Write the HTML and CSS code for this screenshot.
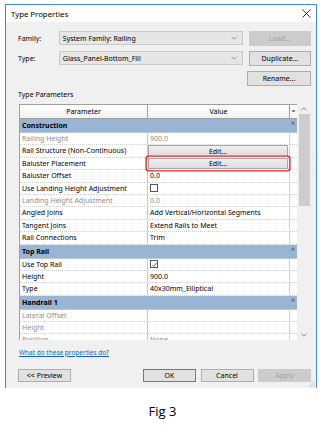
FILE: index.html
```html
<!DOCTYPE html>
<html lang="en">
  <head>
    <meta charset="UTF-8" />
    <title>Type Properties</title>
    <link rel="stylesheet" href="styles.css">
  </head>
  <body>
    <div class="window">
      <div class="titlebar">
        <span class="title">Type Properties</span>
        <svg class="close" width="9" height="9" viewBox="0 0 9 9">
          <path d="M0.5 0.5 L8.5 8.5 M8.5 0.5 L0.5 8.5" stroke="#222" stroke-width="0.9" fill="none" />
        </svg>
      </div>
      <div class="content">
        <div class="form-row">
          <label class="field-label">Family:</label>
          <div class="combo">
            <span>System Family: Railing</span>
            <svg width="6" height="4" viewBox="0 0 6 4"><path d="M0.5 0.8 L3 3.2 L5.5 0.8" stroke="#777" stroke-width="0.7" fill="none" /></svg>
          </div>
          <button class="btn side-btn" disabled>Load...</button>
        </div>
        <div class="form-row">
          <label class="field-label">Type:</label>
          <div class="combo">
            <span>Glass_Panel-Bottom_Fill</span>
            <svg width="6" height="4" viewBox="0 0 6 4"><path d="M0.5 0.8 L3 3.2 L5.5 0.8" stroke="#777" stroke-width="0.7" fill="none" /></svg>
          </div>
          <button class="btn side-btn">Duplicate...</button>
        </div>
        <div class="form-row end">
          <button class="btn side-btn">Rename...</button>
        </div>

        <div class="section-label">Type Parameters</div>

        <div class="grid-wrap">
          <div class="grid">
            <div class="row head">
              <div class="cell c1">Parameter</div>
              <div class="cell c2">Value</div>
              <div class="cell c3">=</div>
            </div>

            <div class="row cat">
              <div class="cat-name">Construction</div>
              <svg class="collapse" width="4" height="4" viewBox="0 0 4 4"><path d="M0.5 2 L2 0.8 L3.5 2 M0.5 3.5 L2 2.3 L3.5 3.5" stroke="#333" stroke-width="0.6" fill="none" /></svg>
            </div>
            <div class="row dim">
              <div class="cell c1">Railing Height</div>
              <div class="cell c2">900.0</div>
              <div class="cell c3"></div>
            </div>
            <div class="row">
              <div class="cell c1">Rail Structure (Non-Continuous)</div>
              <div class="cell c2 btn-cell"><button class="edit">Edit...</button></div>
              <div class="cell c3"></div>
            </div>
            <div class="row">
              <div class="cell c1">Baluster Placement</div>
              <div class="cell c2 btn-cell"><button class="edit marked">Edit...</button></div>
              <div class="cell c3"></div>
            </div>
            <div class="row">
              <div class="cell c1">Baluster Offset</div>
              <div class="cell c2">0.0</div>
              <div class="cell c3"></div>
            </div>
            <div class="row">
              <div class="cell c1">Use Landing Height Adjustment</div>
              <div class="cell c2"><span class="check"></span></div>
              <div class="cell c3"></div>
            </div>
            <div class="row dim">
              <div class="cell c1">Landing Height Adjustment</div>
              <div class="cell c2">0.0</div>
              <div class="cell c3"></div>
            </div>
            <div class="row">
              <div class="cell c1">Angled Joins</div>
              <div class="cell c2">Add Vertical/Horizontal Segments</div>
              <div class="cell c3"></div>
            </div>
            <div class="row">
              <div class="cell c1">Tangent Joins</div>
              <div class="cell c2">Extend Rails to Meet</div>
              <div class="cell c3"></div>
            </div>
            <div class="row">
              <div class="cell c1">Rail Connections</div>
              <div class="cell c2">Trim</div>
              <div class="cell c3"></div>
            </div>

            <div class="row cat">
              <div class="cat-name">Top Rail</div>
              <svg class="collapse" width="4" height="4" viewBox="0 0 4 4"><path d="M0.5 2 L2 0.8 L3.5 2 M0.5 3.5 L2 2.3 L3.5 3.5" stroke="#333" stroke-width="0.6" fill="none" /></svg>
            </div>
            <div class="row">
              <div class="cell c1">Use Top Rail</div>
              <div class="cell c2">
                <span class="check">
                  <svg width="7" height="7" viewBox="0 0 7 7"><path d="M1.3 3.8 L2.8 5.3 L5.8 1.6" stroke="#333" stroke-width="0.8" fill="none" /></svg>
                </span>
              </div>
              <div class="cell c3"></div>
            </div>
            <div class="row">
              <div class="cell c1">Height</div>
              <div class="cell c2">900.0</div>
              <div class="cell c3"></div>
            </div>
            <div class="row">
              <div class="cell c1">Type</div>
              <div class="cell c2">40x30mm_Elliptical</div>
              <div class="cell c3"></div>
            </div>

            <div class="row cat">
              <div class="cat-name">Handrail 1</div>
              <svg class="collapse" width="4" height="4" viewBox="0 0 4 4"><path d="M0.5 2 L2 0.8 L3.5 2 M0.5 3.5 L2 2.3 L3.5 3.5" stroke="#333" stroke-width="0.6" fill="none" /></svg>
            </div>
            <div class="row dim">
              <div class="cell c1">Lateral Offset</div>
              <div class="cell c2"></div>
              <div class="cell c3"></div>
            </div>
            <div class="row dim">
              <div class="cell c1">Height</div>
              <div class="cell c2"></div>
              <div class="cell c3"></div>
            </div>
            <div class="row dim">
              <div class="cell c1">Position</div>
              <div class="cell c2">None</div>
              <div class="cell c3"></div>
            </div>
          </div>

          <div class="scrollbar">
            <svg class="arrow" width="6" height="4" viewBox="0 0 6 4"><path d="M0.5 3.2 L3 0.8 L5.5 3.2" stroke="#555" stroke-width="0.7" fill="none" /></svg>
            <div class="track"><div class="thumb"></div></div>
            <svg class="arrow" width="6" height="4" viewBox="0 0 6 4"><path d="M0.5 0.8 L3 3.2 L5.5 0.8" stroke="#555" stroke-width="0.7" fill="none" /></svg>
          </div>
        </div>

        <a class="help-link" href="#">What do these properties do?</a>

        <div class="footer">
          <button class="btn foot-btn">&lt;&lt; Preview</button>
          <div class="foot-right">
            <button class="btn foot-btn default">OK</button>
            <button class="btn foot-btn">Cancel</button>
            <button class="btn foot-btn" disabled>Apply</button>
          </div>
        </div>
      </div>
      <svg class="grip" width="6" height="6" viewBox="0 0 6 6">
        <rect x="4.5" y="0.5" width="1" height="1" fill="#aaa" />
        <rect x="2.5" y="2.5" width="1" height="1" fill="#aaa" />
        <rect x="4.5" y="2.5" width="1" height="1" fill="#aaa" />
        <rect x="0.5" y="4.5" width="1" height="1" fill="#aaa" />
        <rect x="2.5" y="4.5" width="1" height="1" fill="#aaa" />
        <rect x="4.5" y="4.5" width="1" height="1" fill="#aaa" />
      </svg>
    </div>

    <div class="caption">Fig 3</div>
  </body>
</html>
```

FILE: styles.css
```css
body {
  margin: 0;
  background-color: white;
  font-family: "Noto Sans", "Liberation Sans", sans-serif;
  font-size: 7px;
  color: #000;
}
.window {
  position: relative;
  margin: 4px 0 0 5px;
  width: 310px;
  border: 1px solid #3d8ddb;
  border-bottom: none;
}
.titlebar {
  height: 17px;
  background-color: white;
  display: flex;
  align-items: center;
  justify-content: space-between;
  padding: 0 5px 0 5px;
}
.title {
  font-size: 7.8px;
}
.content {
  background-color: #f0f0f0;
  padding: 9px 5px 7px 12px;
  height: 350px;
}
.form-row {
  display: flex;
  align-items: center;
  height: 14px;
  margin-bottom: 6px;
}
.form-row.end {
  justify-content: flex-end;
}
.field-label {
  width: 42px;
}
.combo {
  width: 178px;
  height: 12px;
  border: 1px solid #c8c8c8;
  background-color: #e6e6e6;
  display: flex;
  align-items: center;
  justify-content: space-between;
  padding: 0 5px 0 4px;
  box-sizing: content-box;
  margin-right: 6px;
}
.combo span {
  margin-left: -1px;
}
.btn {
  font-family: inherit;
  font-size: 7px;
  padding: 0;
  background-color: #e1e1e1;
  border: 1px solid #adadad;
  color: #000;
  box-sizing: border-box;
}
.btn:disabled {
  background-color: #cccccc;
  border-color: #cccccc;
  color: #a0a0a0;
}
.side-btn {
  width: 64px;
  height: 15px;
}
.section-label {
  margin-top: -1px;
  height: 10px;
  line-height: 10px;
}
.grid-wrap {
  margin-top: 4px;
  margin-left: 1px;
  height: 236px;
  display: flex;
  width: 291px;
}
.grid {
  width: 278px;
  height: 236px;
  overflow: hidden;
  background-color: white;
  border-left: 1px solid #a0a0a0;
  box-sizing: border-box;
}
.row {
  display: flex;
  height: 12.4px;
  border-bottom: 1px dotted #d0d0d0;
  box-sizing: border-box;
}
.cell {
  padding-left: 2px;
  line-height: 11px;
  white-space: nowrap;
  overflow: hidden;
  box-sizing: border-box;
}
.c1 {
  width: 128px;
  border-right: 1px solid #c8c8c8;
}
.c2 {
  width: 142px;
  border-right: 1px solid #d0d0d0;
}
.c3 {
  width: 7px;
  padding: 0;
}
.row.dim {
  color: #8e8e8e;
}
.row.head {
  height: 15px;
  border-top: 1px solid #a0a0a0;
  border-bottom: 1px solid #a0a0a0;
  background: linear-gradient(#ffffff, #f2f2f2);
}
.row.head .cell {
  text-align: center;
  line-height: 13px;
  border-right: 1px solid #a0a0a0;
  padding: 0;
}
.row.head .c3 {
  font-size: 6px;
  border-right: none;
}
.row.cat {
  height: 14px;
  background-color: #9ab5d3;
  border-bottom: 1px solid #b8c9dd;
  align-items: center;
  justify-content: space-between;
  padding: 0 2px 0 2px;
}
.cat-name {
  font-weight: bold;
}
.collapse {
  margin-top: -5px;
}
.btn-cell {
  padding: 0;
  display: flex;
  overflow: visible;
}
.edit {
  flex: 1;
  margin: 0 1px 0 0;
  height: 11.4px;
  font-family: inherit;
  font-size: 7px;
  line-height: 9px;
  padding: 0;
  background: linear-gradient(#eeeeee, #dedede);
  border: 1px solid #a8a8a8;
  color: #000;
}
.edit.marked {
  position: relative;
  z-index: 1;
  border-radius: 1px;
  box-shadow: 0 0 0 1.2px #f4f4f4, 0 0 0 2.6px #e4262c;
}
.check {
  display: inline-block;
  width: 8px;
  height: 8px;
  margin-top: 1.5px;
  border: 1px solid #555;
  box-sizing: border-box;
  vertical-align: top;
  position: relative;
}
.check svg {
  position: absolute;
  left: -0.5px;
  top: -0.5px;
}
.scrollbar {
  width: 13px;
  display: flex;
  flex-direction: column;
  align-items: center;
  background-color: #f0f0f0;
}
.arrow {
  margin: 3px 0 3px 1px;
}
.track {
  flex: 1;
  width: 100%;
  padding-left: 2px;
  box-sizing: border-box;
}
.thumb {
  height: 92px;
  background-color: #cdcdcd;
}
.help-link {
  display: block;
  margin-top: 8px;
  margin-left: 1px;
  height: 10px;
  line-height: 10px;
  color: #1464c8;
  font-size: 6.5px;
  text-decoration: underline;
}
.footer {
  margin-top: 11px;
  display: flex;
  justify-content: space-between;
}
.foot-right {
  display: flex;
  gap: 4.5px;
}
.foot-btn {
  width: 53px;
  height: 13px;
}
.foot-btn.default {
  border-color: #3a86d6;
}
.grip {
  position: absolute;
  right: 1px;
  bottom: 1px;
}
.caption {
  margin-top: 14px;
  text-align: center;
  font-family: "Open Sans", "Liberation Sans", sans-serif;
  font-size: 13px;
  padding-left: 2px;
}
```
